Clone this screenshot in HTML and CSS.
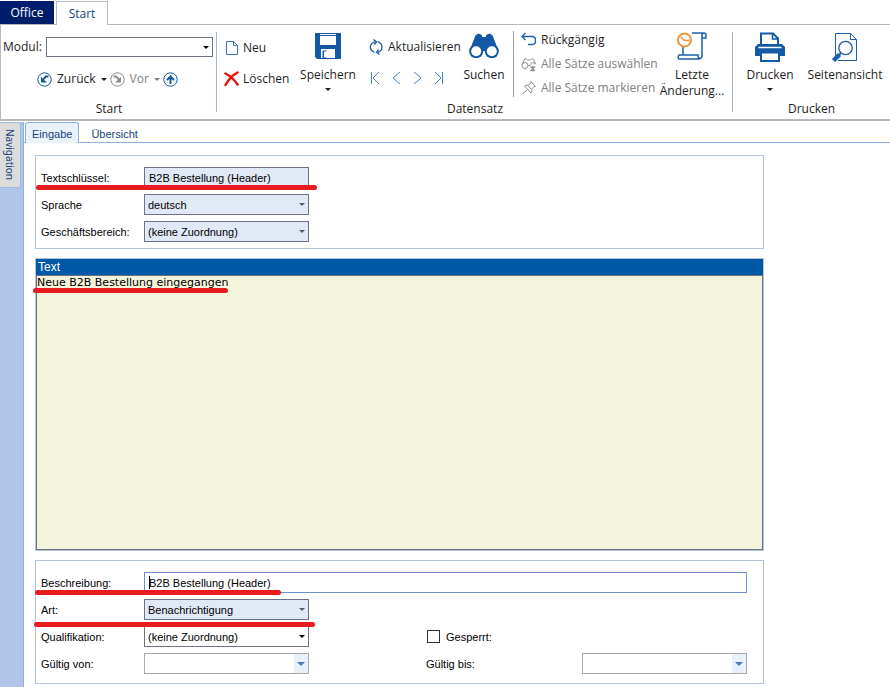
FILE: index.html
```html
<!DOCTYPE html>
<html lang="de">
<head>
    <meta charset="UTF-8">
    <meta name="viewport" content="width=device-width, initial-scale=1.0">
    <title>Textschlüssel</title>
    <link rel="stylesheet" href="styles.css">
</head>
<body>
    <header class="ribbon">
        <nav class="ribbon-tabs">
            <button class="office-tab" type="button">Office</button>
            <button class="start-tab" type="button">Start</button>
        </nav>

        <div class="ribbon-body">
            <section class="group group-start">
                <div class="group-tools start-tools">
                    <div class="module">
                        <label for="modul">Modul:</label>
                        <span class="dropdown dark"><select id="modul"><option></option></select></span>
                    </div>
                    <div class="history">
                        <button class="tool" type="button">
                            <svg width="15" height="15" viewBox="0 0 15 15" fill="none" stroke="#1359a5"><circle cx="7.5" cy="7.5" r="6.7"/><path d="M11.500 4.500H9L5.500 8" stroke-width="2"/><path d="M4 5v5.500h6z" fill="#1359a5" stroke="none"/></svg>
                            <span>Zurück</span>
                            <span class="arrow"></span>
                        </button>
                        <button class="tool" type="button" disabled>
                            <svg width="15" height="15" viewBox="0 0 15 15" fill="none" stroke="#8a8a8a"><circle cx="7.5" cy="7.5" r="6.7"/><path d="M3.500 4.500H6L9.500 8" stroke-width="2"/><path d="M11 5v5.500H5z" fill="#8a8a8a" stroke="none"/></svg>
                            <span>Vor</span>
                            <span class="arrow"></span>
                        </button>
                        <button class="tool" type="button" aria-label="Nach oben">
                            <svg width="15" height="15" viewBox="0 0 15 15" fill="none" stroke="#1359a5"><circle cx="7.5" cy="7.5" r="6.7"/><path d="M7.500 12V5M4 8l3.500-3.500L11 8" stroke-width="2"/></svg>
                        </button>
                    </div>
                </div>
                <h2>Start</h2>
            </section>

            <section class="group group-record">
                <div class="group-tools">
                    <div class="column record-column">
                        <button class="tool" type="button">
                            <svg width="15" height="16" viewBox="0 0 15 16" fill="none" stroke="#3a78b8"><path d="M2.500 1.500h7l4 4v9h-11zM9.500 1.500v4h4"/></svg>
                            <span>Neu</span>
                        </button>
                        <button class="tool" type="button">
                            <svg width="15" height="16" viewBox="0 0 15 16" fill="none" stroke="#f01010" stroke-linecap="round"><path d="M1.500 2.500c5 2.500 9 6.500 12 11" stroke-width="2.500"/><path d="M13.500 1.500C8 4.500 4.500 8.500 1.500 14" stroke-width="2.500"/></svg>
                            <span>Löschen</span>
                        </button>
                    </div>
                    <button class="big-tool save" type="button">
                        <svg width="28" height="28" viewBox="0 0 28 28"><path d="M1 1h26v26H3l-2-2z" fill="#1359a5"/><path d="M6 2h16v11H6zM7 17h14v9H7z" fill="#fff"/><path d="M6 3.500h16" stroke="#1359a5"/><path d="M8.500 18.500h4v7.500h-4z" fill="#1359a5"/><path d="M10 19.500h10v6H10z" fill="#fff"/></svg>
                        <span>Speichern</span>
                        <span class="arrow"></span>
                    </button>
                    <div class="column browse-column">
                        <button class="tool" type="button">
                            <svg width="15" height="16" viewBox="0 0 15 16" fill="none" stroke="#1b5fa8" stroke-width="1.300"><path d="M5.500 13.300C-.2 11-.2 4.500 6.500 2.700M8.500 2.700c5.800 1.800 5.800 8.800.5 10.600"/><path d="M4.500.5l3 2.200-2 2.800M10.500 15.500l-3-2.200 2-2.800"/></svg>
                            <span>Aktualisieren</span>
                        </button>
                        <div class="pager">
                            <button class="tool" type="button" aria-label="Erster Satz"><svg width="13" height="14" viewBox="0 0 13 14" fill="none" stroke="#3f84c4"><path d="M2.500 1v12M10 1L4 7l6 6"/></svg></button>
                            <button class="tool" type="button" aria-label="Voriger Satz"><svg width="13" height="14" viewBox="0 0 13 14" fill="none" stroke="#3f84c4"><path d="M10 1L3 7l7 6"/></svg></button>
                            <button class="tool" type="button" aria-label="Nächster Satz"><svg width="13" height="14" viewBox="0 0 13 14" fill="none" stroke="#3f84c4"><path d="M3 1l7 6-7 6"/></svg></button>
                            <button class="tool" type="button" aria-label="Letzter Satz"><svg width="13" height="14" viewBox="0 0 13 14" fill="none" stroke="#3f84c4"><path d="M10.500 1v12M3 1l6 6-6 6"/></svg></button>
                        </div>
                    </div>
                    <button class="big-tool search" type="button">
                        <svg width="30" height="28" viewBox="0 0 30 28" fill="#1359a5"><path d="M6.500 3.500L9 1.500l4 1.500v2h4V3l4-1.500 2.500 2L25 7l4.500 12-11 3-1.500-3h-4l-1.500 3-11-3L5 7z"/><circle cx="7.200" cy="19.200" r="7"/><circle cx="22.800" cy="19.200" r="7"/><circle cx="7.200" cy="19.200" r="5" fill="#fff"/><circle cx="22.800" cy="19.200" r="5" fill="#fff"/></svg>
                        <span>Suchen</span>
                    </button>
                    <div class="column select-column">
                        <button class="tool" type="button">
                            <svg width="16" height="16" viewBox="0 0 16 16" fill="none" stroke="#1b5fa8" stroke-width="1.300"><path d="M4.500 1L1 4.500 4.500 8M1 4.500h10.500c4 0 4 8 0 8H7"/></svg>
                            <span>Rückgängig</span>
                        </button>
                        <button class="tool" type="button" disabled>
                            <svg width="16" height="16" viewBox="0 0 16 16" fill="none" stroke="#8e8e8e"><circle cx="4" cy="9.500" r="3"/><path d="M1 9l2-5 2-1.500L6.500 4h3L11 2.500 13 4l1.500 4M7 9.500h2M9 9c.5-2.500 4-3 5.500-1"/><path d="M9.500 10.500l4.500 4.500M14 10.500L9.500 15M11.800 10v5.500" stroke-width="1.300"/></svg>
                            <span>Alle Sätze auswählen</span>
                        </button>
                        <button class="tool" type="button" disabled>
                            <svg width="16" height="16" viewBox="0 0 16 16" fill="none" stroke="#8e8e8e"><path d="M1.500 14l5-4.500M3.500 6l6.500 7c1-1 1-2.500.5-3.500l2.500-3h1.500L10 1.500V3L7 5.500C5.500 5 4.500 5 3.500 6zM7 5.500l3.500 4"/></svg>
                            <span>Alle Sätze markieren</span>
                        </button>
                    </div>
                    <button class="big-tool changes" type="button">
                        <svg width="30" height="28" viewBox="0 0 30 28" fill="none" stroke="#1b5fa8" stroke-width="1.500"><path d="M15 1h11M25 6V3c0-2.700 4-2.700 4 0v3h-4v18c0 3-4 3-4 0v-1H2c-1 1-1 4 0 4h21M6 15v8"/><circle cx="7.500" cy="8" r="6.500" stroke="#e8973d" stroke-width="2"/><path d="M3.500 4.500l4 4h5" stroke="#e8973d" stroke-width="1.300"/></svg>
                        <span>Letzte<br>Änderung...</span>
                    </button>
                </div>
                <h2>Datensatz</h2>
            </section>

            <section class="group group-print">
                <div class="group-tools">
                    <button class="big-tool print" type="button">
                        <svg width="30" height="30" viewBox="0 0 30 30"><path d="M6 13V1.500h12l5 5V13z" fill="#fff" stroke="#1359a5" stroke-width="2"/><path d="M17.500 1v6H23" fill="none" stroke="#1359a5" stroke-width="1.500"/><path d="M3 12h24l3 3v9h-6v-4H6v4H0v-9z" fill="#1359a5"/><path d="M3.500 15.500h23" stroke="#fff" stroke-width="1.500"/><path d="M6 20.500h18V29H6z" fill="#fff" stroke="#1359a5" stroke-width="2"/></svg>
                        <span>Drucken</span>
                        <span class="arrow"></span>
                    </button>
                    <button class="big-tool preview" type="button">
                        <svg width="30" height="30" viewBox="0 0 30 30" fill="none" stroke="#1b5fa8"><path d="M5.500 24V1.500h15l6 6v21H8M20.500 1.500v6h6"/><circle cx="15.500" cy="16" r="6.700" stroke-width="1.300"/><path d="M11 21l-2.500 2.500" stroke-width="2"/><path d="M9.500 22.500l-6 6" stroke-width="4.500"/></svg>
                        <span>Seitenansicht</span>
                    </button>
                </div>
                <h2>Drucken</h2>
            </section>
        </div>
    </header>

    <div class="workspace">
        <aside class="sidebar">
            <button class="navigation" type="button">Navigation</button>
        </aside>

        <main class="content">
            <nav class="content-tabs">
                <button class="content-tab active" type="button">Eingabe</button>
                <button class="content-tab" type="button">Übersicht</button>
            </nav>

            <form class="form">
                <section class="panel">
                    <div class="row">
                        <label for="schluessel">Textschlüssel:</label>
                        <input class="field short shaded" id="schluessel" type="text" value="B2B Bestellung (Header)">
                        <span class="marker marker-key"></span>
                    </div>
                    <div class="row">
                        <label for="sprache">Sprache</label>
                        <span class="dropdown shaded short"><select id="sprache"><option>deutsch</option></select></span>
                    </div>
                    <div class="row">
                        <label for="bereich">Geschäftsbereich:</label>
                        <span class="dropdown shaded short"><select id="bereich"><option>(keine Zuordnung)</option></select></span>
                    </div>
                </section>

                <section class="text-panel">
                    <label class="text-title" for="text">Text</label>
                    <textarea id="text" spellcheck="false">Neue B2B Bestellung eingegangen</textarea>
                    <span class="marker marker-text"></span>
                </section>

                <section class="panel details">
                    <div class="row">
                        <label for="beschreibung">Beschreibung:</label>
                        <span class="focused">
                            <input class="field" id="beschreibung" type="text" value="B2B Bestellung (Header)">
                            <span class="caret"></span>
                        </span>
                        <span class="marker marker-description"></span>
                    </div>
                    <div class="row">
                        <label for="art">Art:</label>
                        <span class="dropdown shaded short"><select id="art"><option>Benachrichtigung</option></select></span>
                        <span class="marker marker-type"></span>
                    </div>
                    <div class="row">
                        <label for="qualifikation">Qualifikation:</label>
                        <span class="dropdown dark short"><select id="qualifikation"><option>(keine Zuordnung)</option></select></span>
                        <div class="second check">
                            <input id="gesperrt" type="checkbox">
                            <label for="gesperrt">Gesperrt:</label>
                        </div>
                    </div>
                    <div class="row">
                        <label for="von">Gültig von:</label>
                        <span class="dropdown date short"><select id="von"><option></option></select></span>
                        <div class="second">
                            <label for="bis">Gültig bis:</label>
                            <span class="dropdown date short"><select id="bis"><option></option></select></span>
                        </div>
                    </div>
                </section>
            </form>
        </main>
    </div>
</body>
</html>
```
FILE: styles.css
```css
* {
    box-sizing: border-box;
}
body {
    margin: 0;
    min-height: 100vh;
    display: flex;
    flex-direction: column;
    background-color: #fff;
    font-family: "Liberation Sans", Arial, sans-serif;
    font-size: 11px;
    color: #000;
}
button, input, select, textarea {
    font: inherit;
    color: inherit;
    margin: 0;
    padding: 0;
    border: none;
    border-radius: 0;
    background: none;
    outline: none;
}
svg {
    display: block;
    flex-shrink: 0;
}

/* Ribbon */
.ribbon {
    font-family: "Open Sans", "Noto Sans", sans-serif;
    font-size: 12px;
    line-height: 16px;
    color: #1e1e1e;
}
.ribbon-tabs {
    display: flex;
    gap: 2px;
    height: 25px;
    padding-top: 1px;
    border-bottom: 1px solid #b9b9c1;
}
.office-tab {
    width: 54px;
    background-color: #001d6b;
    color: #fff;
}
.start-tab {
    width: 52px;
    height: 24px;
    border: 1px solid #b9b9c1;
    border-bottom: none;
    background-color: #fff;
    color: #16437e;
}
.ribbon-body {
    display: flex;
    height: 96px;
    border-left: 1px solid #b9b9c1;
    border-bottom: 2px solid #b9b9c1;
}
.group {
    display: flex;
    flex-direction: column;
    flex-shrink: 0;
    position: relative;
}
.group:not(:last-child)::after {
    content: "";
    position: absolute;
    top: 7px;
    bottom: 7px;
    right: 0;
    border-right: 1px solid #a3b9d3;
}
.group h2 {
    margin: 0;
    font-size: 12px;
    font-weight: normal;
    text-align: center;
}
.group-tools {
    display: flex;
    height: 76px;
}
.group-start {
    width: 216px;
}
.group-record {
    width: 516px;
}
.group-print {
    width: 157px;
}
.start-tools {
    flex-direction: column;
    gap: 14px;
    padding: 12px 4px 0 2px;
}
.module {
    display: flex;
    align-items: center;
    gap: 4px;
}
.module .dropdown {
    flex: 1;
    height: 20px;
}
.history {
    display: flex;
    align-items: center;
    gap: 3px;
    padding-left: 34px;
}
.tool {
    display: flex;
    align-items: center;
    gap: 4px;
    white-space: nowrap;
}
.history .tool {
    gap: 5px;
}
.tool:disabled {
    color: #808080;
}
.arrow {
    border: 3px solid transparent;
    border-top-color: currentColor;
    border-bottom: none;
}
.column {
    display: flex;
    flex-direction: column;
}
.record-column {
    gap: 15px;
    width: 78px;
    padding: 15px 0 0 7px;
}
.browse-column {
    gap: 16px;
    width: 98px;
    padding: 14px 0 0 8px;
}
.pager {
    display: flex;
    gap: 8px;
}
.select-column {
    gap: 8px;
    width: 144px;
    height: 66px;
    margin: 6px 0 0 4px;
    padding: 1px 0 0 7px;
    border-left: 1px solid #a0a0a0;
}
.big-tool {
    display: flex;
    flex-direction: column;
    align-items: center;
    padding-top: 7px;
    white-space: nowrap;
}
.big-tool svg {
    height: 28px;
    margin-bottom: 7px;
}
.big-tool .arrow {
    margin-top: 5px;
}
.save {
    width: 66px;
}
.search {
    width: 50px;
}
.changes {
    width: 70px;
}
.print {
    width: 74px;
}
.preview {
    width: 76px;
}
.print svg, .preview svg {
    height: 30px;
    margin-bottom: 5px;
}

/* Workspace */
.workspace {
    display: flex;
    flex: 1;
    padding-top: 1px;
}
.sidebar {
    width: 24px;
    flex-shrink: 0;
    background-color: #b1c5e8;
    border-right: 1px solid #8db0e2;
}
.navigation {
    width: 21px;
    height: 66px;
    border: 1px solid #9dbbe5;
    border-left: none;
    border-radius: 0 3px 3px 0;
    background-color: #dcdcdc;
    color: #1b3f80;
    font-family: "Noto Sans", sans-serif;
    font-size: 10px;
    line-height: 16px;
    writing-mode: vertical-rl;
}
.content {
    display: flex;
    flex-direction: column;
    flex: 1;
    min-width: 0;
}
.content-tabs {
    display: flex;
    height: 21px;
    border-bottom: 1px solid #8db0e2;
}
.content-tab {
    height: 21px;
    padding: 2px 12px 0;
    color: #16437e;
}
.content-tab.active {
    margin-left: 1px;
    padding: 1px 6px 0;
    border: 1px solid #8db0e2;
    border-bottom: none;
    border-radius: 3px 3px 0 0;
    background-color: #e9f1fb;
}
.form {
    display: flex;
    flex-direction: column;
    flex: 1;
    gap: 9px;
    width: 100%;
    max-width: 740px;
    padding: 12px 0 3px 11px;
}
.panel {
    display: flex;
    flex-direction: column;
    gap: 6px;
    padding: 11px 16px 6px 5px;
    border: 1px solid #b2c4d6;
}
.details {
    padding-bottom: 9px;
}
.row {
    display: flex;
    align-items: center;
    position: relative;
    height: 21px;
}
.row > label {
    width: 103px;
    flex-shrink: 0;
}
.field {
    flex: 1;
    width: 100%;
    height: 21px;
    padding: 0 4px;
    border: 1px solid #6d8fce;
}
.focused {
    position: relative;
    flex: 1;
}
.caret {
    position: absolute;
    top: 4px;
    left: 5px;
    height: 13px;
    border-left: 1px solid #000;
}
.short {
    flex: none;
    width: 165px;
}
.shaded {
    border: 1px solid #6f7186;
    background-color: #e1e8f6;
}
.dropdown {
    display: block;
    position: relative;
    height: 21px;
    border: 1px solid #6f7186;
}
.dropdown select {
    appearance: none;
    display: block;
    width: 100%;
    height: 100%;
    padding: 0 18px 0 3px;
}
.dropdown::after {
    content: "";
    position: absolute;
    top: 8px;
    right: 3px;
    border: 3px solid transparent;
    border-top-color: #55586a;
    border-bottom: none;
    pointer-events: none;
}
.dropdown.dark::after {
    border-top-color: #000;
}
.dropdown.date {
    border-color: #a9a9a9;
    background: linear-gradient(#e8f1fb, #e8f1fb) right / 14px 100% no-repeat;
}
.dropdown.date::after {
    border-width: 4px;
    border-bottom: none;
    border-top-color: #4a7ab5;
}
.second {
    display: flex;
    align-items: center;
    justify-content: space-between;
    flex: 1;
    margin-left: 117px;
}
.check {
    justify-content: flex-start;
    gap: 6px;
}
.check input {
    appearance: none;
    width: 13px;
    height: 13px;
    margin-left: 1px;
    border: 1px solid #333;
}

/* Text editor */
.text-panel {
    display: flex;
    flex-direction: column;
    flex: 1;
    position: relative;
    border: 1px solid #b2c4d6;
}
.text-title {
    height: 16px;
    padding-left: 2px;
    background-color: #0059a6;
    color: #fff;
    font-size: 12px;
    line-height: 16px;
}
.text-panel textarea {
    flex: 1;
    min-height: 120px;
    border: 1px solid #6f7186;
    background-color: #f4f4dc;
    font-family: "DejaVu Sans", Verdana, sans-serif;
    font-size: 11px;
    line-height: 13px;
    resize: none;
}

/* Red underlines */
.marker {
    position: absolute;
    height: 5px;
    border-radius: 3px;
    background-color: #e81c1e;
    pointer-events: none;
}
.marker-key {
    top: 18px;
    left: -5px;
    width: 281px;
}
.marker-text {
    top: 29px;
    left: -3px;
    width: 195px;
}
.marker-description {
    top: 18px;
    left: -6px;
    width: 246px;
}
.marker-type {
    top: 23px;
    left: -7px;
    width: 281px;
    z-index: 1;
}
```
